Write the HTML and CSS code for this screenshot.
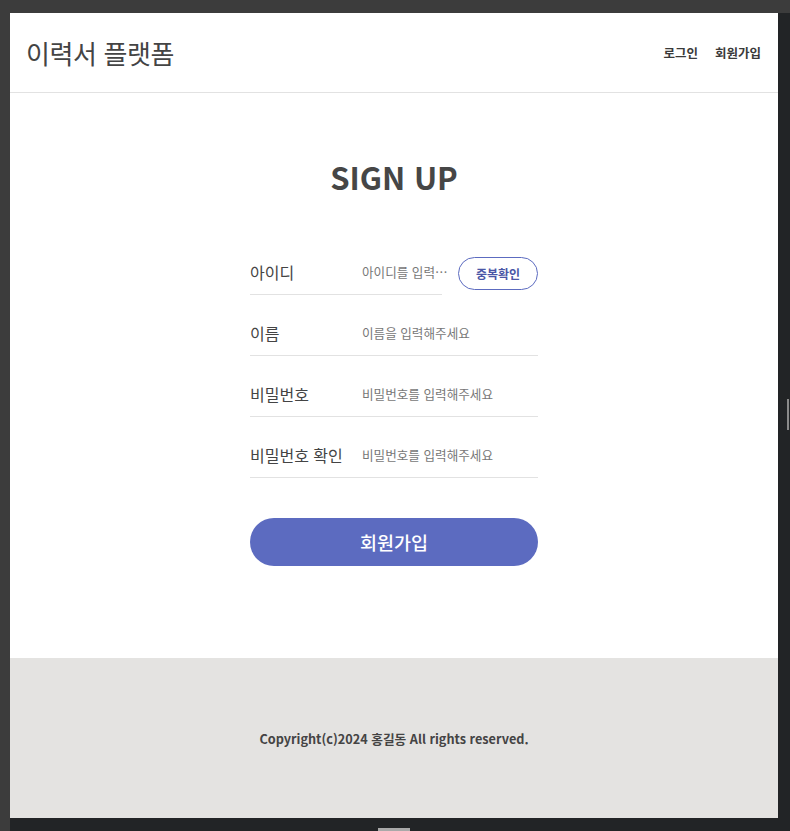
FILE: index.html
```html
<!DOCTYPE html>
<html lang="ko">
<head>
<meta charset="utf-8">
<title>이력서 플랫폼</title>
<link rel="stylesheet" href="styles.css">
</head>
<body>
<div class="frame">
  <div class="page">
    <header class="header">
      <div class="logo">이력서 플랫폼</div>
      <nav class="nav">
        <a class="nav-link" href="#">로그인</a>
        <a class="nav-link" href="#">회원가입</a>
      </nav>
    </header>
    <main class="main">
      <h1 class="title">SIGN UP</h1>
      <form class="form">
        <div class="row row-id">
          <label class="field field-short">
            <span class="label">아이디</span>
            <input class="input input-id" type="text" placeholder="아이디를 입력해주세요">
          </label>
          <button type="button" class="check-btn">중복확인</button>
        </div>
        <div class="row">
          <label class="field">
            <span class="label">이름</span>
            <input class="input" type="text" placeholder="이름을 입력해주세요">
          </label>
        </div>
        <div class="row">
          <label class="field">
            <span class="label">비밀번호</span>
            <input class="input" type="password" placeholder="비밀번호를 입력해주세요">
          </label>
        </div>
        <div class="row">
          <label class="field">
            <span class="label">비밀번호 확인</span>
            <input class="input" type="password" placeholder="비밀번호를 입력해주세요">
          </label>
        </div>
        <button type="button" class="submit-btn">회원가입</button>
      </form>
    </main>
    <footer class="footer">
      <p class="copyright">Copyright(c)2024 홍길동 All rights reserved.</p>
    </footer>
  </div>
  <div class="scroll-thumb"></div>
  <div class="bottom-handle"></div>
</div>
</body>
</html>
```
FILE: styles.css
```css
* { box-sizing: border-box; }
html, body { margin: 0; padding: 0; }
body {
  background: #3c3c3c;
  font-family: "Noto Sans CJK KR", "Noto Sans", sans-serif;
  width: 790px;
  height: 831px;
  overflow: hidden;
}
.frame {
  position: relative;
  margin: 13px 0 0 10px;
  width: 780px;
  height: 818px;
  background: #222426;
}
.page {
  width: 768px;
  height: 805px;
  background: #fff;
  display: flex;
  flex-direction: column;
}
.header {
  height: 80px;
  border-bottom: 1px solid #e2e2e2;
  display: flex;
  align-items: center;
  justify-content: space-between;
  padding: 0 17px 0 16px;
}
.logo {
  font-size: 26px;
  color: #444;
  letter-spacing: -0.4px;
}
.nav {
  display: flex;
  gap: 17px;
}
.nav-link {
  font-size: 12.5px;
  font-weight: 700;
  color: #3a3a3a;
  text-decoration: none;
}
.main {
  padding-top: 64px;
  height: 565px;
  display: flex;
  flex-direction: column;
  align-items: center;
}
.title {
  margin: 0;
  font-size: 31px;
  line-height: 40px;
  font-weight: 700;
  color: #464646;
}
.form {
  margin-top: 37px;
  width: 288px;
  display: flex;
  flex-direction: column;
}
.row {
  display: flex;
  align-items: flex-end;
}
.field {
  flex: 1 1 auto;
  min-width: 0;
  display: flex;
  align-items: center;
  height: 61px;
  padding-top: 27px;
  padding-bottom: 11px;
  border-bottom: 1px solid #e2e2e2;
}
.field-short { flex: 0 0 192px; width: 192px; }
.label {
  width: 112px;
  flex: 0 0 112px;
  font-size: 16px;
  line-height: 22px;
  color: #444;
}
.input {
  flex: 1 1 0;
  width: 0;
  min-width: 0;
  border: 0;
  outline: 0;
  padding: 0;
  font-family: inherit;
  font-size: 12.6px;
  line-height: 22px;
  color: #333;
  text-overflow: ellipsis;
  background: transparent;
}
.input-id { margin-right: -8px; }
.input::placeholder { color: #777; }
.check-btn {
  flex: 0 0 80px;
  margin-left: 16px;
  margin-bottom: 5px;
  width: 80px;
  height: 33px;
  border: 1px solid #5c6bc0;
  border-radius: 17px;
  background: #fff;
  color: #4a56a6;
  font-family: inherit;
  font-size: 12px;
  font-weight: 700;
  padding: 0;
  white-space: nowrap;
}
.submit-btn {
  margin-top: 40px;
  height: 48px;
  border: 0;
  border-radius: 24px;
  background: #5c6bc0;
  color: #fff;
  font-family: inherit;
  font-size: 18.5px;
  font-weight: 500;
}
.footer {
  flex: 1;
  background: #e4e3e1;
  display: flex;
  align-items: center;
  justify-content: center;
}
.copyright {
  margin: 0;
  font-size: 12.7px;
  font-weight: 700;
  color: #444;
}
.scroll-thumb {
  position: absolute;
  left: 777px;
  top: 386px;
  width: 2px;
  height: 31px;
  background: #8a8a8a;
}
.bottom-handle {
  position: absolute;
  left: 368px;
  top: 815px;
  width: 32px;
  height: 3px;
  background: #a9a9a9;
}
```
